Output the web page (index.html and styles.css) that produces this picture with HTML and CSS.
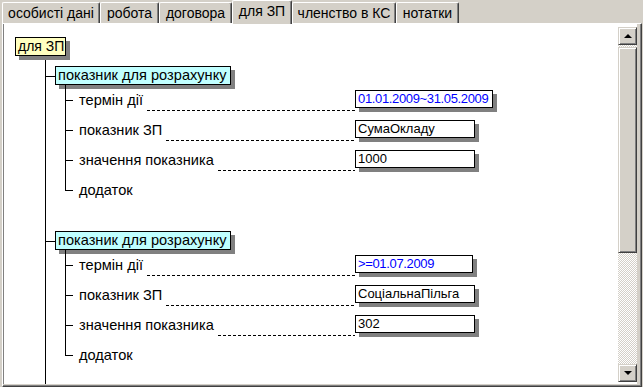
FILE: index.html
```html
<!DOCTYPE html>
<html>
<head>
<meta charset="utf-8">
<link rel="stylesheet" href="styles.css">
</head>
<body>
<div class="window">
  <div class="tabs">
    <div class="tab t1">особисті дані</div>
    <div class="tab t2">робота</div>
    <div class="tab t3">договора</div>
    <div class="tab t4 active">для ЗП</div>
    <div class="tab t5">членство в КС</div>
    <div class="tab t6">нотатки</div>
  </div>
  <div class="panel">
    <div class="view">
      <div class="canvas">
        <div class="root">для ЗП</div>
        <div class="tree">
          <div class="group">
            <div class="head"><span class="conn"></span><span class="gbox">показник для розрахунку</span></div>
            <div class="rows">
              <div class="row"><span class="stub"></span><div class="lead"><span class="label">термін дії</span><span class="dash"></span></div><div class="val blue w138">01.01.2009~31.05.2009</div></div>
              <div class="row"><span class="stub"></span><div class="lead"><span class="label">показник ЗП</span><span class="dash"></span></div><div class="val">СумаОкладу</div></div>
              <div class="row"><span class="stub"></span><div class="lead"><span class="label">значення показника</span><span class="dash"></span></div><div class="val">1000</div></div>
              <div class="row last"><span class="stub"></span><span class="label">додаток</span></div>
            </div>
          </div>
          <div class="group">
            <div class="head"><span class="conn"></span><span class="gbox">показник для розрахунку</span></div>
            <div class="rows">
              <div class="row"><span class="stub"></span><div class="lead"><span class="label">термін дії</span><span class="dash"></span></div><div class="val blue w118">&gt;=01.07.2009</div></div>
              <div class="row"><span class="stub"></span><div class="lead"><span class="label">показник ЗП</span><span class="dash"></span></div><div class="val">СоціальнаПільга</div></div>
              <div class="row"><span class="stub"></span><div class="lead"><span class="label">значення показника</span><span class="dash"></span></div><div class="val">302</div></div>
              <div class="row last"><span class="stub"></span><span class="label">додаток</span></div>
            </div>
          </div>
        </div>
      </div>
      <div class="sbar">
        <div class="sbtn"><span class="arrow up"></span></div>
        <div class="track"><div class="thumb"></div></div>
        <div class="sbtn"><span class="arrow down"></span></div>
      </div>
    </div>
  </div>
</div>
</body>
</html>
```
FILE: styles.css
```css
html, body {
  margin: 0;
  padding: 0;
  background: #d4d0c8;
}
body {
  font-family: "Liberation Sans", Arial, sans-serif;
  font-size: 14px;
  color: #000;
  width: 643px;
  height: 387px;
  overflow: hidden;
}
.window {
  display: flex;
  flex-direction: column;
  height: 387px;
}
.tabs {
  display: flex;
  align-items: flex-end;
  height: 23px;
  padding-left: 2px;
  flex: none;
}
.tab {
  box-sizing: border-box;
  height: 21px;
  line-height: 20px;
  text-align: center;
  white-space: nowrap;
  border-top: 1px solid #fff;
  border-left: 1px solid #fff;
  border-right: 1px solid #404040;
  box-shadow: inset -1px 0 #808080;
  border-radius: 2px 2px 0 0;
  background: #d4d0c8;
  font-size: 14px;
}
.t1 { width: 98px; }
.t2 { width: 59px; }
.t3 { width: 73px; }
.t4 { width: 60px; }
.t5 { width: 104px; }
.t6 { width: 63px; }
.tab.active {
  height: 24px;
  line-height: 21px;
  margin-bottom: -1px;
  position: relative;
  z-index: 1;
}
.panel {
  flex: 1;
  display: flex;
  margin-right: 1px;
  margin-left: 2px;
  border-top: 1px solid #fff;
  border-left: 1px solid #fff;
  border-right: 1px solid #404040;
  border-bottom: 1px solid #404040;
  box-shadow: inset -1px -1px #808080;
  padding: 0 4px 2px 0;
  min-height: 0;
}
.view {
  flex: 1;
  display: flex;
  background: #fff;
  border-left: 1px solid #808080;
  min-height: 0;
}
.canvas {
  flex: 1;
  overflow: hidden;
  padding: 13px 0 0 11px;
  display: flex;
  flex-direction: column;
  align-items: flex-start;
}
.root {
  box-sizing: border-box;
  width: 51px;
  height: 19px;
  line-height: 17px;
  padding-left: 2px;
  border: 1px solid #000;
  background: #ffffc0;
  box-shadow: 4px 4px 0 #808080;
  white-space: nowrap;
  font-size: 14px;
}
.tree {
  margin: 4px 0 0 30px;
  padding-top: 6px;
  border-left: 1px solid #000;
  display: flex;
  flex-direction: column;
  gap: 26px;
  flex: 1 0 auto;
  padding-bottom: 40px;
}
.head {
  display: flex;
  align-items: flex-start;
}
.conn {
  box-sizing: border-box;
  width: 9px;
  height: 11px;
  border-bottom: 1px solid #000;
}
.gbox {
  box-sizing: border-box;
  width: 176px;
  height: 19px;
  line-height: 17px;
  padding-left: 2px;
  border: 1px solid #000;
  background: #c0ffff;
  box-shadow: 4px 4px 0 #808080;
  white-space: nowrap;
  font-size: 14.6px;
}
.rows {
  margin-left: 19px;
  display: flex;
  flex-direction: column;
}
.row {
  display: flex;
  align-items: flex-start;
  height: 30px;
  border-left: 1px solid #000;
}
.stub {
  box-sizing: border-box;
  width: 7px;
  height: 16px;
  border-bottom: 1px solid #000;
  flex: none;
}
.row.last {
  border-left: none;
}
.row.last .stub {
  width: 8px;
  border-left: 1px solid #000;
}
.lead {
  width: 282px;
  display: flex;
  align-items: flex-start;
  flex: none;
}
.label {
  margin-left: 6px;
  line-height: 30px;
  white-space: nowrap;
  font-size: 14.6px;
}
.dash {
  flex: 1;
  height: 1px;
  margin: 25px 0 0 4px;
  background: repeating-linear-gradient(90deg, #000 0 3px, transparent 3px 5px);
}
.val {
  box-sizing: border-box;
  width: 120px;
  height: 18px;
  line-height: 16px;
  margin-top: 5px;
  padding-left: 2px;
  border: 1px solid #000;
  background: #fff;
  box-shadow: 4px 4px 0 #808080;
  white-space: nowrap;
  flex: none;
  font-size: 13px;
}
.val.blue { color: #0000ff; letter-spacing: -0.35px; }
.w138 { width: 138px; }
.w118 { width: 118px; }
.sbar {
  width: 19px;
  margin: 3px 0 2px;
  display: flex;
  flex-direction: column;
  flex: none;
}
.sbtn, .thumb {
  box-sizing: border-box;
  background: #d4d0c8;
  border-top: 1px solid #d4d0c8;
  border-left: 1px solid #d4d0c8;
  border-right: 1px solid #404040;
  border-bottom: 1px solid #404040;
  box-shadow: inset 1px 1px #fff, inset -1px -1px #808080;
}
.sbtn {
  height: 18px;
  display: flex;
  align-items: center;
  justify-content: center;
  flex: none;
}
.track {
  flex: 1;
  padding-top: 2px;
  background: repeating-conic-gradient(#ffffff 0 25%, #d4d0c8 0 50%) 0 0 / 2px 2px;
}
.thumb {
  height: 206px;
}
.arrow {
  width: 0;
  height: 0;
  border-left: 4px solid transparent;
  border-right: 4px solid transparent;
}
.arrow.up { border-bottom: 4px solid #000; }
.arrow.down { border-top: 4px solid #000; }
```
